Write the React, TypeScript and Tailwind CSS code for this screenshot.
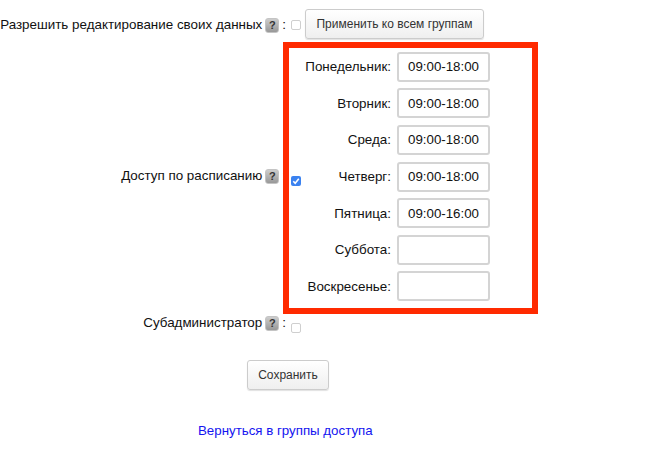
const days = [
  { name: "Понедельник", value: "09:00-18:00" },
  { name: "Вторник", value: "09:00-18:00" },
  { name: "Среда", value: "09:00-18:00" },
  { name: "Четверг", value: "09:00-18:00" },
  { name: "Пятница", value: "09:00-16:00" },
  { name: "Суббота", value: "" },
  { name: "Воскресенье", value: "" },
];

function Help() {
  return (
    <span className="inline-flex h-[15px] w-[14px] items-center justify-center rounded-[3px] border border-[#c4c4c4] bg-gradient-to-b from-[#cdcdcd] to-[#989898] text-[11px] font-bold leading-none text-[#333]">
      ?
    </span>
  );
}

function Label({ text }: { text: string }) {
  return (
    <span className="flex items-center justify-end gap-[3px] whitespace-nowrap">
      {text}
      <Help />
      <span>:</span>
    </span>
  );
}

function Check({ checked = false }: { checked?: boolean }) {
  return checked ? (
    <span className="flex h-[10px] w-[10px] items-center justify-center rounded-[2px] bg-[#3b82f0]">
      <svg viewBox="0 0 10 10" className="h-[10px] w-[10px]">
        <path d="M2.3 5.2 L4.2 7.2 L7.8 2.8" fill="none" stroke="#fff" strokeWidth="1.6" />
      </svg>
    </span>
  ) : (
    <span className="block h-[10px] w-[10px] rounded-[2px] border border-[#cfcfcf] bg-white" />
  );
}

const btn =
  "rounded-[3px] border border-[#cccccc] bg-gradient-to-b from-white to-[#efefef] text-[12px] text-[#333] shadow-[0_1px_1px_rgba(0,0,0,0.12)]";

export default function App() {
  return (
    <div className="relative h-[469px] w-[670px] overflow-hidden bg-white font-['Liberation_Sans',Arial,sans-serif] text-[13.4px] text-[#111]">
      <div className="flex h-[47px] items-start pt-[9px]">
        <div className="mt-[6px] w-[286px]">
          <Label text="Разрешить редактирование своих данных" />
        </div>
        <div className="ml-[5px] mt-[11px]">
          <Check />
        </div>
        <button className={`${btn} ml-[4px] h-[30px] w-[179px]`}>Применить ко всем группам</button>
      </div>

      <div className="flex h-[266px] items-center">
        <div className="mt-[-7px] w-[286px]">
          <Label text="Доступ по расписанию" />
        </div>
        <div className="ml-[5px] mt-[1px]">
          <Check checked />
        </div>
        <div className="ml-[6px] mt-[-7px] flex w-[183px] flex-col gap-[6.67px]">
          {days.map((d) => (
            <div key={d.name} className="flex items-center justify-end gap-[6px]">
              <span className="whitespace-nowrap pt-[1px]">{d.name}:</span>
              <div className="flex h-[30px] w-[93px] shrink-0 items-center overflow-hidden rounded-[3px] border-2 border-[#d4d4d4] bg-white pl-[9px] pt-[1px] pr-[8px] text-[13.3px] whitespace-nowrap">
                {d.value}
              </div>
            </div>
          ))}
        </div>
      </div>

      <div className="flex h-[38px] items-start">
        <div className="w-[286px]">
          <Label text="Субадминистратор" />
        </div>
        <div className="ml-[5px] mt-[10px]">
          <Check />
        </div>
      </div>

      <div className="ml-[247px] mt-[9px]">
        <button className={`${btn} h-[30px] w-[82px]`}>Сохранить</button>
      </div>

      <div className="ml-[198px] mt-[31px]">
        <a href="#" className="text-[13.3px] text-[#1414f0]">
          Вернуться в группы доступа
        </a>
      </div>

      <div className="pointer-events-none absolute left-[283px] top-[42px] h-[272px] w-[255px] border-[6px] border-[#ff2a00]" />
    </div>
  );
}
